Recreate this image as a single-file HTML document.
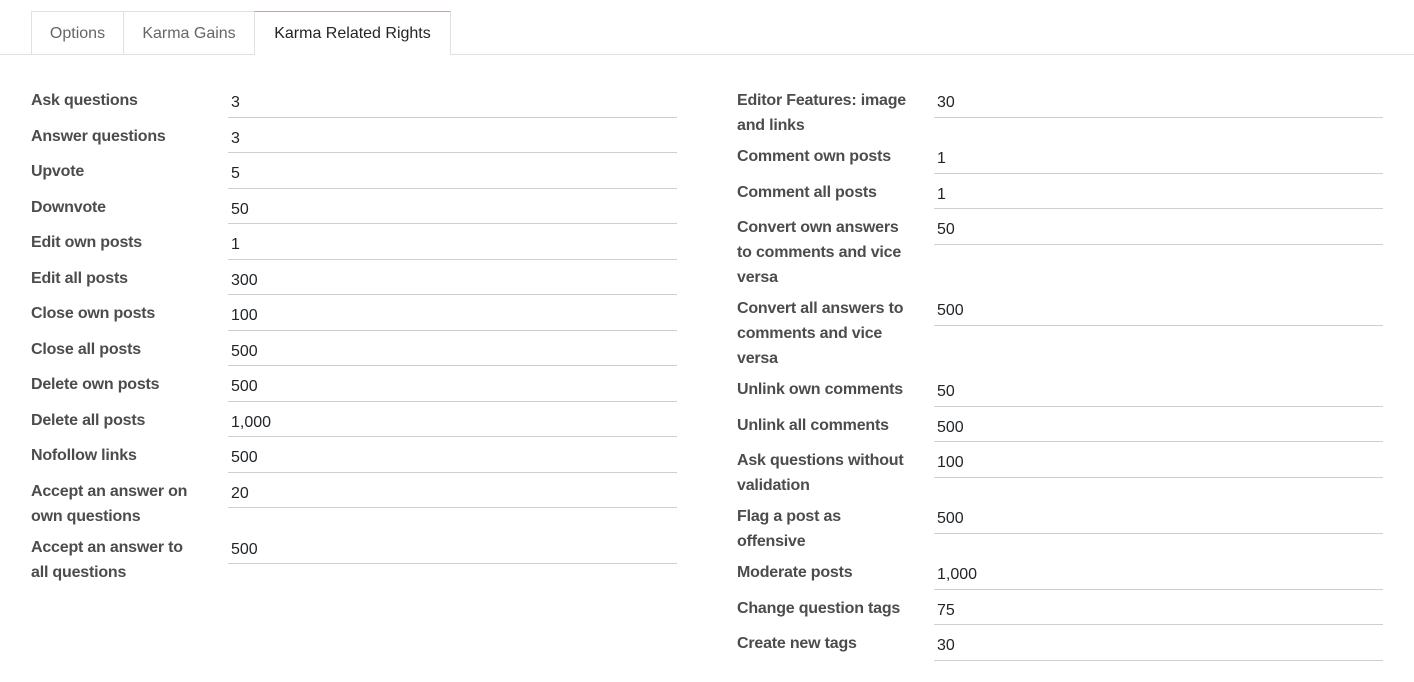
<!DOCTYPE html>
<html><head><meta charset="utf-8"><style>
body{margin:0;background:#fff;width:1414px;height:682px;overflow:hidden;font-family:"Liberation Sans",Arial,sans-serif;}
.tabs{position:absolute;top:11px;left:0;width:1414px;height:43px;border-bottom:1px solid #dee2e6;}
.tab{position:absolute;top:0;height:43px;line-height:43px;text-align:center;font-size:16px;color:#666;border:1px solid #dee2e6;border-bottom:none;box-sizing:border-box;}
.tab.active{color:#212529;background:#fff;height:44px;border-color:#dee2e6;border-top-color:#b9a4b4}
.col{position:absolute;top:88px;width:450px;}
.row{display:flex;margin-bottom:6px;}
.lab{width:197px;flex:none;font-weight:bold;font-size:16px;line-height:25px;color:#4c4c4c;white-space:nowrap;letter-spacing:-0.2px}
.val{flex:none;width:449px;height:29.5px;box-sizing:border-box;border-bottom:1px solid #cfcfcf;font-size:16px;line-height:30px;padding-left:3px;color:#212529;}
</style></head><body>
<div class="tabs">
<div class="tab" style="left:31px;width:93px">Options</div>
<div class="tab" style="left:123px;width:132px">Karma Gains</div>
<div class="tab active" style="left:254px;width:197px">Karma Related Rights</div>
</div>
<div class="col" style="left:31px">
<div class="row"><div class="lab">Ask questions</div><div class="val">3</div></div>
<div class="row"><div class="lab">Answer questions</div><div class="val">3</div></div>
<div class="row"><div class="lab">Upvote</div><div class="val">5</div></div>
<div class="row"><div class="lab">Downvote</div><div class="val">50</div></div>
<div class="row"><div class="lab">Edit own posts</div><div class="val">1</div></div>
<div class="row"><div class="lab">Edit all posts</div><div class="val">300</div></div>
<div class="row"><div class="lab">Close own posts</div><div class="val">100</div></div>
<div class="row"><div class="lab">Close all posts</div><div class="val">500</div></div>
<div class="row"><div class="lab">Delete own posts</div><div class="val">500</div></div>
<div class="row"><div class="lab">Delete all posts</div><div class="val">1,000</div></div>
<div class="row"><div class="lab">Nofollow links</div><div class="val">500</div></div>
<div class="row"><div class="lab">Accept an answer on<br>own questions</div><div class="val">20</div></div>
<div class="row"><div class="lab">Accept an answer to<br>all questions</div><div class="val">500</div></div>
</div>
<div class="col" style="left:737px">
<div class="row"><div class="lab">Editor Features: image<br>and links</div><div class="val">30</div></div>
<div class="row"><div class="lab">Comment own posts</div><div class="val">1</div></div>
<div class="row"><div class="lab">Comment all posts</div><div class="val">1</div></div>
<div class="row"><div class="lab">Convert own answers<br>to comments and vice<br>versa</div><div class="val">50</div></div>
<div class="row"><div class="lab">Convert all answers to<br>comments and vice<br>versa</div><div class="val">500</div></div>
<div class="row"><div class="lab">Unlink own comments</div><div class="val">50</div></div>
<div class="row"><div class="lab">Unlink all comments</div><div class="val">500</div></div>
<div class="row"><div class="lab">Ask questions without<br>validation</div><div class="val">100</div></div>
<div class="row"><div class="lab">Flag a post as<br>offensive</div><div class="val">500</div></div>
<div class="row"><div class="lab">Moderate posts</div><div class="val">1,000</div></div>
<div class="row"><div class="lab">Change question tags</div><div class="val">75</div></div>
<div class="row"><div class="lab">Create new tags</div><div class="val">30</div></div>
</div>
</body></html>
